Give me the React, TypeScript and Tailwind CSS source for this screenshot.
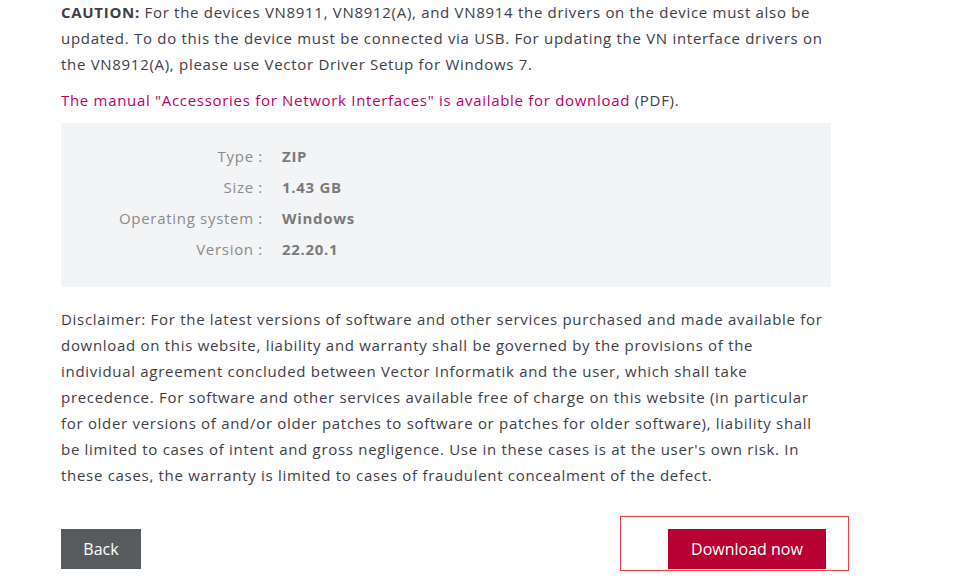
import React from "react";

export default function App() {
  const font = { fontFamily: '"Open Sans", "Liberation Sans", sans-serif' };
  return (
    <div className="relative w-[958px] h-[587px] bg-white overflow-hidden" style={font}>
      <div className="pl-[61px] w-[831px] text-[15px] leading-[26px] tracking-[0.7px] text-[#3e3e48]">
        <p className="-mt-[1px]">
          <span className="font-bold">CAUTION:</span> For the devices VN8911, VN8912(A), and VN8914 the drivers on the device must also be
          <br />
          updated. To do this the device must be connected via USB. For updating the VN interface drivers on
          <br />
          the VN8912(A), please use Vector Driver Setup for Windows 7.
        </p>
        <p className="mt-[10px]">
          <span className="text-[#b8006b]">The manual "Accessories for Network Interfaces" is available for download</span> (PDF).
        </p>
        <div className="mt-[10px] h-[164px] bg-[#f3f4f6] pt-[17px]">
          {[
            ["Type :", "ZIP"],
            ["Size :", "1.43 GB"],
            ["Operating system :", "Windows"],
            ["Version :", "22.20.1"],
          ].map(([k, v]) => (
            <div key={k} className="flex h-[31px] items-center">
              <div className="w-[202px] text-right text-[#8a8a8a]">{k}</div>
              <div className="ml-[19px] font-bold text-[#7a7a7a]">{v}</div>
            </div>
          ))}
        </div>
        <p className="mt-[19px]">
          Disclaimer: For the latest versions of software and other services purchased and made available for
          <br />
          download on this website, liability and warranty shall be governed by the provisions of the
          <br />
          individual agreement concluded between Vector Informatik and the user, which shall take
          <br />
          precedence. For software and other services available free of charge on this website (in particular
          <br />
          for older versions of and/or older patches to software or patches for older software), liability shall
          <br />
          be limited to cases of intent and gross negligence. Use in these cases is at the user's own risk. In
          <br />
          these cases, the warranty is limited to cases of fraudulent concealment of the defect.
        </p>
        <div className="mt-[41px] flex justify-between pr-[5px] tracking-normal">
          <button className="w-[80px] h-[40px] bg-[#575b5e] text-white text-[16px]">Back</button>
          <button className="w-[158px] h-[40px] bg-[#b80033] text-white text-[16px]">Download now</button>
        </div>
      </div>
      <div className="absolute left-[620px] top-[516px] w-[229px] h-[55px] border border-[#ee4040]" />
    </div>
  );
}
